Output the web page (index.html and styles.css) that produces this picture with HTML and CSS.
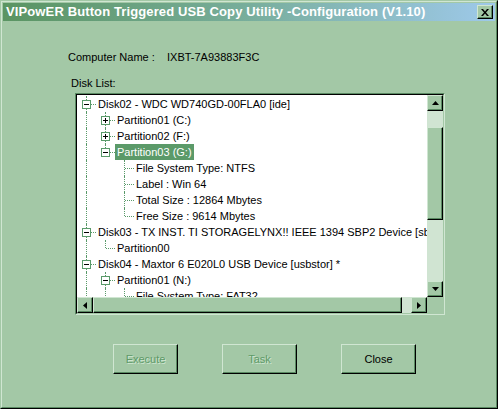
FILE: index.html
```html
<!DOCTYPE html>
<html lang="en">
<head>
    <meta charset="UTF-8">
    <title>VIPowER Button Triggered USB Copy Utility -Configuration (V1.10)</title>
    <link rel="stylesheet" href="styles.css">
</head>
<body>

<div class="window">
  <div class="frame">

    <!-- Title bar -->
    <div class="titlebar">
      <span class="title">VIPowER Button Triggered USB Copy Utility -Configuration (V1.10)</span>
      <span class="close-btn">
        <svg width="8" height="7" viewBox="0 0 8 7"><path d="M0 0h2l2 2.5L6 0h2L5 3.5 8 7H6L4 4.5 2 7H0l3-3.5z" fill="#000"/></svg>
      </span>
    </div>

    <div class="body">
      <div class="info">
        <span class="info-label">Computer Name :</span>
        <span class="info-value">IXBT-7A93883F3C</span>
      </div>

      <div class="list-label">Disk List:</div>

      <!-- Disk tree -->
      <div class="tree-box">
        <div class="tree-inner">
          <div class="tree">
            <div class="row">
              <span class="cell tee"><span class="exp minus"></span></span>
              <span class="label">Disk02 - WDC WD740GD-00FLA0 [ide]</span>
            </div>
            <div class="row">
              <span class="cell pipe"></span>
              <span class="cell tee"><span class="exp plus"></span></span>
              <span class="label">Partition01 (C:)</span>
            </div>
            <div class="row">
              <span class="cell pipe"></span>
              <span class="cell tee"><span class="exp plus"></span></span>
              <span class="label">Partition02 (F:)</span>
            </div>
            <div class="row">
              <span class="cell pipe"></span>
              <span class="cell elbow"><span class="exp minus"></span></span>
              <span class="label selected">Partition03 (G:)</span>
            </div>
            <div class="row">
              <span class="cell pipe"></span>
              <span class="cell"></span>
              <span class="cell tee"></span>
              <span class="label">File System Type: NTFS</span>
            </div>
            <div class="row">
              <span class="cell pipe"></span>
              <span class="cell"></span>
              <span class="cell tee"></span>
              <span class="label">Label : Win 64</span>
            </div>
            <div class="row">
              <span class="cell pipe"></span>
              <span class="cell"></span>
              <span class="cell tee"></span>
              <span class="label">Total Size : 12864 Mbytes</span>
            </div>
            <div class="row">
              <span class="cell pipe"></span>
              <span class="cell"></span>
              <span class="cell elbow"></span>
              <span class="label">Free Size : 9614 Mbytes</span>
            </div>
            <div class="row">
              <span class="cell tee"><span class="exp minus"></span></span>
              <span class="label">Disk03 - TX INST. TI STORAGELYNX!! IEEE 1394 SBP2 Device [sbp2]</span>
            </div>
            <div class="row">
              <span class="cell pipe"></span>
              <span class="cell elbow"></span>
              <span class="label">Partition00</span>
            </div>
            <div class="row">
              <span class="cell tee"><span class="exp minus"></span></span>
              <span class="label">Disk04 - Maxtor 6 E020L0 USB Device [usbstor] *</span>
            </div>
            <div class="row">
              <span class="cell pipe"></span>
              <span class="cell tee"><span class="exp minus"></span></span>
              <span class="label">Partition01 (N:)</span>
            </div>
            <div class="row">
              <span class="cell pipe"></span>
              <span class="cell pipe"></span>
              <span class="cell tee"></span>
              <span class="label">File System Type: FAT32</span>
            </div>
          </div>

          <div class="vscroll">
            <span class="sbtn">
              <svg width="7" height="4" viewBox="0 0 7 4"><path d="M3.5 0L7 4H0z" fill="#000"/></svg>
            </span>
            <div class="vtrack"><span class="vthumb"></span></div>
            <span class="sbtn">
              <svg width="7" height="4" viewBox="0 0 7 4"><path d="M0 0h7L3.5 4z" fill="#000"/></svg>
            </span>
          </div>

          <div class="hscroll">
            <span class="sbtn">
              <svg width="4" height="7" viewBox="0 0 4 7"><path d="M4 0v7L0 3.5z" fill="#000"/></svg>
            </span>
            <div class="htrack"><span class="hthumb"></span></div>
            <span class="sbtn">
              <svg width="4" height="7" viewBox="0 0 4 7"><path d="M0 0l4 3.5L0 7z" fill="#000"/></svg>
            </span>
          </div>

          <div class="corner"></div>
        </div>
      </div>

      <!-- Buttons -->
      <div class="buttons">
        <span class="btn disabled btn-small">Execute</span>
        <span class="btn disabled">Task</span>
        <span class="btn">Close</span>
      </div>
    </div>

  </div>
</div>

</body>
</html>
```

FILE: styles.css
```css
body {
    margin: 0;
    font-family: "Liberation Sans", Arial, sans-serif;
    font-size: 11px;
    color: #000;
}
.window {
    width: 498px;
    height: 409px;
    box-sizing: border-box;
    border: 1px solid;
    border-color: #a3c8a6 #000 #000 #a3c8a6;
    background-color: #a3c8a6;
}
.frame {
    height: 100%;
    box-sizing: border-box;
    border: 1px solid;
    border-color: #d0e6d2 #5a8a62 #5a8a62 #d0e6d2;
    padding: 1px;
}
.titlebar {
    height: 18px;
    display: flex;
    align-items: center;
    justify-content: space-between;
    padding: 0 2px 0 3px;
    background: linear-gradient(to right, #5a9462, #78ae9c 50%, #9ec9ea);
}
.title {
    color: #fff;
    font-weight: bold;
    font-size: 13px;
    letter-spacing: 0.12px;
    line-height: 18px;
    white-space: nowrap;
}
.close-btn {
    width: 16px;
    height: 14px;
    box-sizing: border-box;
    border: 1px solid;
    border-color: #d0e6d2 #000 #000 #d0e6d2;
    box-shadow: inset -1px -1px #5a8a62;
    background-color: #a3c8a6;
    display: flex;
    align-items: center;
    justify-content: center;
}
.close-btn svg {
    display: block;
}
.info {
    margin-top: 28px;
    padding-left: 65px;
    display: flex;
    line-height: 16px;
}
.info-label {
    width: 99px;
}
.list-label {
    margin-top: 10px;
    padding-left: 68px;
    line-height: 16px;
}
.tree-box {
    margin: 2px 0 0 72px;
    width: 370px;
    height: 222px;
    box-sizing: border-box;
    border: 1px solid;
    border-color: #5a8a62 #d0e6d2 #d0e6d2 #5a8a62;
}
.tree-inner {
    height: 100%;
    box-sizing: border-box;
    border: 1px solid;
    border-color: #000 #a3c8a6 #a3c8a6 #000;
    display: grid;
    grid-template-columns: 1fr 16px;
    grid-template-rows: 1fr 16px;
}
.tree {
    background-color: #fff;
    overflow: hidden;
    padding-top: 1px;
}
.row {
    display: flex;
    height: 16px;
    line-height: 16px;
    white-space: nowrap;
}
.cell {
    flex: none;
    width: 19px;
    height: 16px;
    position: relative;
}
.cell.pipe::before,
.cell.tee::before,
.cell.elbow::before {
    content: '';
    position: absolute;
    left: 9px;
    top: 0;
    height: 16px;
    border-left: 1px dotted #5a9a6a;
}
.cell.elbow::before {
    height: 8px;
}
.cell.tee::after,
.cell.elbow::after {
    content: '';
    position: absolute;
    left: 10px;
    top: 8px;
    width: 9px;
    border-top: 1px dotted #5a9a6a;
}
.exp {
    position: absolute;
    left: 5px;
    top: 4px;
    width: 9px;
    height: 9px;
    box-sizing: border-box;
    border: 1px solid #5a9a6a;
    background-color: #fff;
    z-index: 1;
}
.exp::before {
    content: '';
    position: absolute;
    left: 1px;
    top: 3px;
    width: 5px;
    height: 1px;
    background-color: #000;
}
.exp.plus::after {
    content: '';
    position: absolute;
    left: 3px;
    top: 1px;
    width: 1px;
    height: 5px;
    background-color: #000;
}
.label {
    padding: 0 2px;
}
.label.selected {
    background-color: #5b9a69;
    color: #fff;
}
.sbtn {
    flex: none;
    width: 16px;
    height: 16px;
    box-sizing: border-box;
    border: 1px solid;
    border-color: #d0e6d2 #000 #000 #d0e6d2;
    box-shadow: inset -1px -1px #5a8a62;
    background-color: #a3c8a6;
    display: flex;
    align-items: center;
    justify-content: center;
}
.sbtn svg {
    display: block;
}
.vscroll {
    display: flex;
    flex-direction: column;
}
.vtrack {
    flex: 1;
    background-color: #d0e4d2;
    padding-top: 16px;
}
.vthumb {
    display: block;
    width: 16px;
    height: 93px;
    box-sizing: border-box;
    border: 1px solid;
    border-color: #d0e6d2 #000 #000 #d0e6d2;
    box-shadow: inset -1px -1px #5a8a62;
    background-color: #a3c8a6;
}
.hscroll {
    display: flex;
}
.htrack {
    flex: 1;
    display: flex;
    background-color: #d0e4d2;
}
.hthumb {
    display: block;
    width: 309px;
    height: 16px;
    box-sizing: border-box;
    border: 1px solid;
    border-color: #d0e6d2 #000 #000 #d0e6d2;
    box-shadow: inset -1px -1px #5a8a62;
    background-color: #a3c8a6;
}
.corner {
    background-color: #a3c8a6;
}
.buttons {
    margin-top: 29px;
    padding-left: 110px;
    display: flex;
    gap: 44px;
}
.btn {
    width: 75px;
    height: 30px;
    box-sizing: border-box;
    border: 1px solid;
    border-color: #d0e6d2 #000 #000 #d0e6d2;
    box-shadow: inset -1px -1px #5a8a62;
    background-color: #a3c8a6;
    display: flex;
    align-items: center;
    justify-content: center;
    font-size: 11px;
}
.btn-small {
    width: 65px;
}
.btn.disabled {
    color: #5e9a68;
    text-shadow: 1px 1px 0 #d0e6d2;
}
```
